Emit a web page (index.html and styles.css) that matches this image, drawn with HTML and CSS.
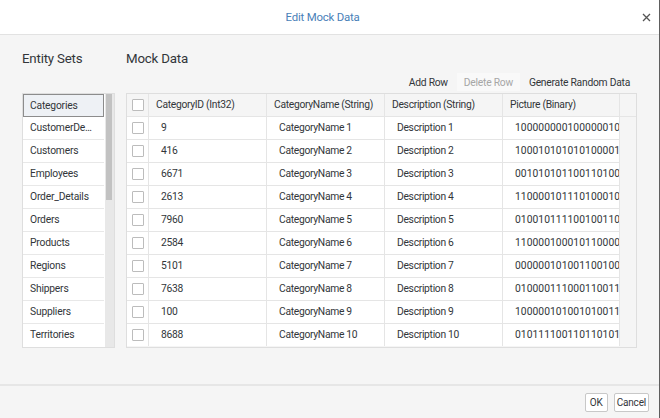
FILE: index.html
```html
<!DOCTYPE html>
<html>
<head>
<meta charset="utf-8">
<link rel="stylesheet" href="styles.css">
</head>
<body>
<div class="dialog">
  <header class="header">
    <span></span>
    <h1 class="title">Edit Mock Data</h1>
    <button class="close" aria-label="Close">
      <svg width="9" height="9" viewBox="0 0 9 9"><path d="M1 1L8 8M8 1L1 8" stroke="#555" stroke-width="1.3" fill="none"/></svg>
    </button>
  </header>
  <main class="content">
    <h2 class="heading h-entity">Entity Sets</h2>
    <h2 class="heading h-mock">Mock Data</h2>
    <div class="toolbar">
      <button class="tbtn">Add Row</button>
      <button class="tbtn disabled">Delete Row</button>
      <button class="tbtn">Generate Random Data</button>
    </div>
    <div class="entity-list">
      <ul class="items">
        <li class="item selected">Categories</li>
        <li class="item">CustomerDemographics</li>
        <li class="item">Customers</li>
        <li class="item">Employees</li>
        <li class="item">Order_Details</li>
        <li class="item">Orders</li>
        <li class="item">Products</li>
        <li class="item">Regions</li>
        <li class="item">Shippers</li>
        <li class="item">Suppliers</li>
        <li class="item">Territories</li>
      </ul>
      <div class="scrollbar"><div class="thumb"></div></div>
    </div>
    <div class="table">
      <div class="row head">
        <div class="cell chk"><span class="box"></span></div>
        <div class="cell">CategoryID (Int32)</div>
        <div class="cell">CategoryName (String)</div>
        <div class="cell">Description (String)</div>
        <div class="cell">Picture (Binary)</div>
        <div class="cell filler"></div>
      </div>
      <div class="row"><div class="cell chk"><span class="box"></span></div><div class="cell">9</div><div class="cell">CategoryName 1</div><div class="cell">Description 1</div><div class="cell bin">100000000100000010</div></div>
      <div class="row"><div class="cell chk"><span class="box"></span></div><div class="cell">416</div><div class="cell">CategoryName 2</div><div class="cell">Description 2</div><div class="cell bin">100010101010100001</div></div>
      <div class="row"><div class="cell chk"><span class="box"></span></div><div class="cell">6671</div><div class="cell">CategoryName 3</div><div class="cell">Description 3</div><div class="cell bin">001010101100110100</div></div>
      <div class="row"><div class="cell chk"><span class="box"></span></div><div class="cell">2613</div><div class="cell">CategoryName 4</div><div class="cell">Description 4</div><div class="cell bin">110000101110100010</div></div>
      <div class="row"><div class="cell chk"><span class="box"></span></div><div class="cell">7960</div><div class="cell">CategoryName 5</div><div class="cell">Description 5</div><div class="cell bin">010010111100100110</div></div>
      <div class="row"><div class="cell chk"><span class="box"></span></div><div class="cell">2584</div><div class="cell">CategoryName 6</div><div class="cell">Description 6</div><div class="cell bin">110000100010110000</div></div>
      <div class="row"><div class="cell chk"><span class="box"></span></div><div class="cell">5101</div><div class="cell">CategoryName 7</div><div class="cell">Description 7</div><div class="cell bin">000000101001100100</div></div>
      <div class="row"><div class="cell chk"><span class="box"></span></div><div class="cell">7638</div><div class="cell">CategoryName 8</div><div class="cell">Description 8</div><div class="cell bin">010000111000110011</div></div>
      <div class="row"><div class="cell chk"><span class="box"></span></div><div class="cell">100</div><div class="cell">CategoryName 9</div><div class="cell">Description 9</div><div class="cell bin">100000101001010011</div></div>
      <div class="row"><div class="cell chk"><span class="box"></span></div><div class="cell">8688</div><div class="cell">CategoryName 10</div><div class="cell">Description 10</div><div class="cell bin">010111100110110101</div></div>
    </div>
  </main>
  <footer class="footer">
    <button class="fbtn ok">OK</button>
    <button class="fbtn">Cancel</button>
  </footer>
</div>
</body>
</html>
```
FILE: styles.css
```css
* { box-sizing: border-box; }
html, body { margin: 0; padding: 0; }
body {
  font-family: Roboto, "Liberation Sans", sans-serif;
  color: #32363a;
  background: #f5f5f5;
}
button { font-family: inherit; cursor: pointer; }
.dialog {
  width: 660px;
  height: 418px;
  display: flex;
  flex-direction: column;
  border-right: 1px solid #5e5e5e;
  background: #f5f5f5;
}
.header {
  height: 35px;
  flex: none;
  background: #fff;
  border-bottom: 1px solid #e2e2e2;
  display: grid;
  grid-template-columns: 1fr auto 1fr;
  align-items: center;
}
.title {
  margin: 0 14px 0 0;
  font-size: 11.4px;
  letter-spacing: -0.2px;
  font-weight: normal;
  color: #4a7fb8;
}
.close {
  justify-self: end;
  margin-right: 4px;
  width: 18px;
  height: 18px;
  border: 0;
  background: transparent;
  padding: 0;
  display: flex;
  align-items: center;
  justify-content: center;
}
.content {
  flex: 1;
  display: grid;
  grid-template-columns: 93px 511px;
  grid-template-rows: 17px 26px auto;
  column-gap: 11px;
  padding: 15px 0 0 22px;
  align-content: start;
}
.heading {
  margin: 0;
  font-size: 13.3px;
  font-weight: normal;
  line-height: 17px;
  letter-spacing: -0.2px;
}
.h-entity { grid-column: 1; grid-row: 1; }
.h-mock { grid-column: 2; grid-row: 1; }
.toolbar {
  grid-column: 2;
  grid-row: 2;
  display: flex;
  justify-content: flex-end;
  align-items: flex-start;
  gap: 2px;
  padding-top: 6px;
}
.tbtn {
  border: 0;
  background: transparent;
  font-size: 10.3px;
  letter-spacing: -0.25px;
  color: #32363a;
  padding: 0 7px;
  height: 18px;
}
.tbtn.disabled { color: #a6a6a6; background: #f9f9f9; }
.entity-list {
  grid-column: 1;
  grid-row: 3;
  display: flex;
  border: 1px solid #dedede;
  background: #fff;
}
.items {
  list-style: none;
  margin: 0;
  padding: 0;
  width: 81px;
  flex: none;
}
.item {
  height: 23px;
  line-height: 22px;
  font-size: 10.3px;
  letter-spacing: -0.2px;
  padding-left: 7px;
  padding-right: 6px;
  border-bottom: 1px solid #e8e8e8;
  white-space: nowrap;
  overflow: hidden;
  text-overflow: ellipsis;
  background: #fff;
}
.item:last-child { border-bottom: 0; }
.item.selected {
  background: #eef1f5;
  border: 1px solid #8c8c8c;
  line-height: 21px;
  padding-left: 6px;
}
.scrollbar {
  flex: 1;
  background: #e8e8e8;
  padding: 0 2px 0 1px;
  margin-left: 1px;
}
.thumb {
  height: 106px;
  background: #c2c2c2;
}
.table {
  grid-column: 2;
  grid-row: 3;
  border: 1px solid #dedede;
  background: #f5f5f5;
}
.row {
  display: grid;
  grid-template-columns: 22px 118px 118px 118px 117px 1fr;
  height: 23px;
}
.row:last-child .cell { border-bottom: 0; height: 22px; }
.cell {
  background: #fff;
  border-right: 1px solid #e5e5e5;
  border-bottom: 1px solid #e5e5e5;
  font-size: 10.3px;
  letter-spacing: -0.3px;
  line-height: 22px;
  padding-left: 12px;
  white-space: nowrap;
  overflow: hidden;
}
.cell.bin { letter-spacing: 0.05px; padding-right: 3px; }
.head .cell {
  background: #f5f5f5;
  padding-left: 7px;
}
.cell.chk {
  padding: 0;
  display: flex;
  align-items: center;
  justify-content: center;
}
.box {
  width: 12px;
  height: 12px;
  border: 1.5px solid #bcbcbc;
  background: #fff;
  border-radius: 1px;
}
.cell.filler { border-right: 0; }
.footer {
  height: 34px;
  flex: none;
  border-top: 2px solid #e6e6e6;
  display: flex;
  justify-content: flex-end;
  align-items: center;
  gap: 6px;
  padding-right: 10px;
}
.fbtn {
  height: 19px;
  padding: 0 2px;
  font-size: 10px;
  letter-spacing: -0.2px;
  color: #32363a;
  background: #fff;
  border: 1px solid #c8c8c8;
  border-radius: 2px;
}
.fbtn.ok { width: 23px; }
```
